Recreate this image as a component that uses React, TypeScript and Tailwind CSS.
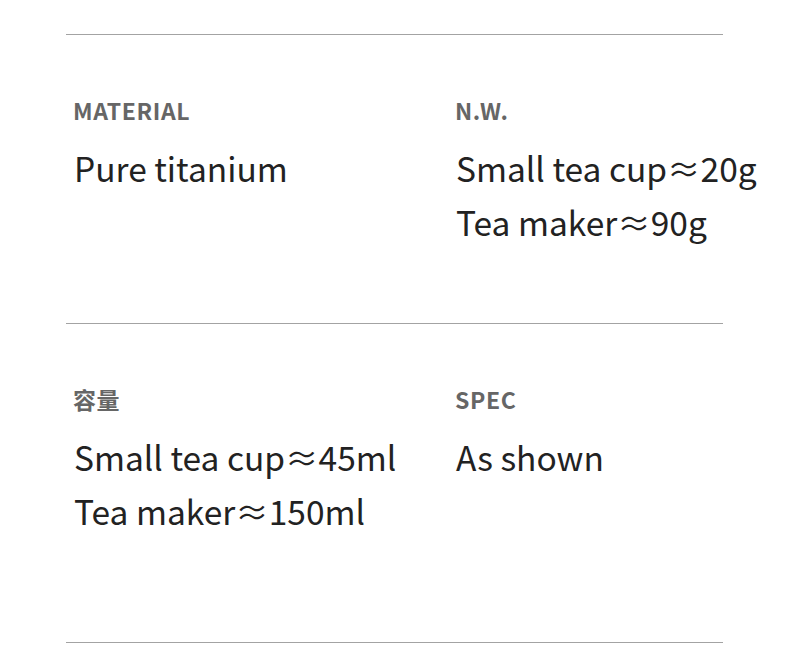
import React from 'react';

type Spec = { label: string; lines: string[] };

const rows: { height: string; items: Spec[] }[] = [
  {
    height: 'h-[289px]',
    items: [
      { label: 'MATERIAL', lines: ['Pure titanium'] },
      { label: 'N.W.', lines: ['Small tea cup≈20g', 'Tea maker≈90g'] },
    ],
  },
  {
    height: 'h-[319px]',
    items: [
      { label: '容量', lines: ['Small tea cup≈45ml', 'Tea maker≈150ml'] },
      { label: 'SPEC', lines: ['As shown'] },
    ],
  },
];

const SpecCell: React.FC<{ spec: Spec }> = ({ spec }) => (
  <div className="flex flex-col">
    <div className="pl-[7px] text-[23px] leading-[33px] font-bold tracking-[0.6px] text-[#666666] whitespace-nowrap">
      {spec.label}
    </div>
    <div className="mt-[14px] pl-[8px] text-[33.5px] leading-[54px] text-[#222222] whitespace-nowrap">
      {spec.lines.map((l) => (
        <div key={l}>{l}</div>
      ))}
    </div>
  </div>
);

export default function App() {
  return (
    <div
      className="w-[790px] h-[655px] bg-white overflow-hidden pt-[34px]"
      style={{ fontFamily: '"Noto Sans CJK SC", "Noto Sans", sans-serif' }}
    >
      <div className="ml-[66px] w-[657px] border-b border-[#a3a3a3]">
        {rows.map((row, i) => (
          <div key={i} className={`${row.height} border-t border-[#a3a3a3] pt-[59px] grid grid-cols-[382px_1fr]`}>
            {row.items.map((s) => (
              <SpecCell key={s.label} spec={s} />
            ))}
          </div>
        ))}
      </div>
    </div>
  );
}
